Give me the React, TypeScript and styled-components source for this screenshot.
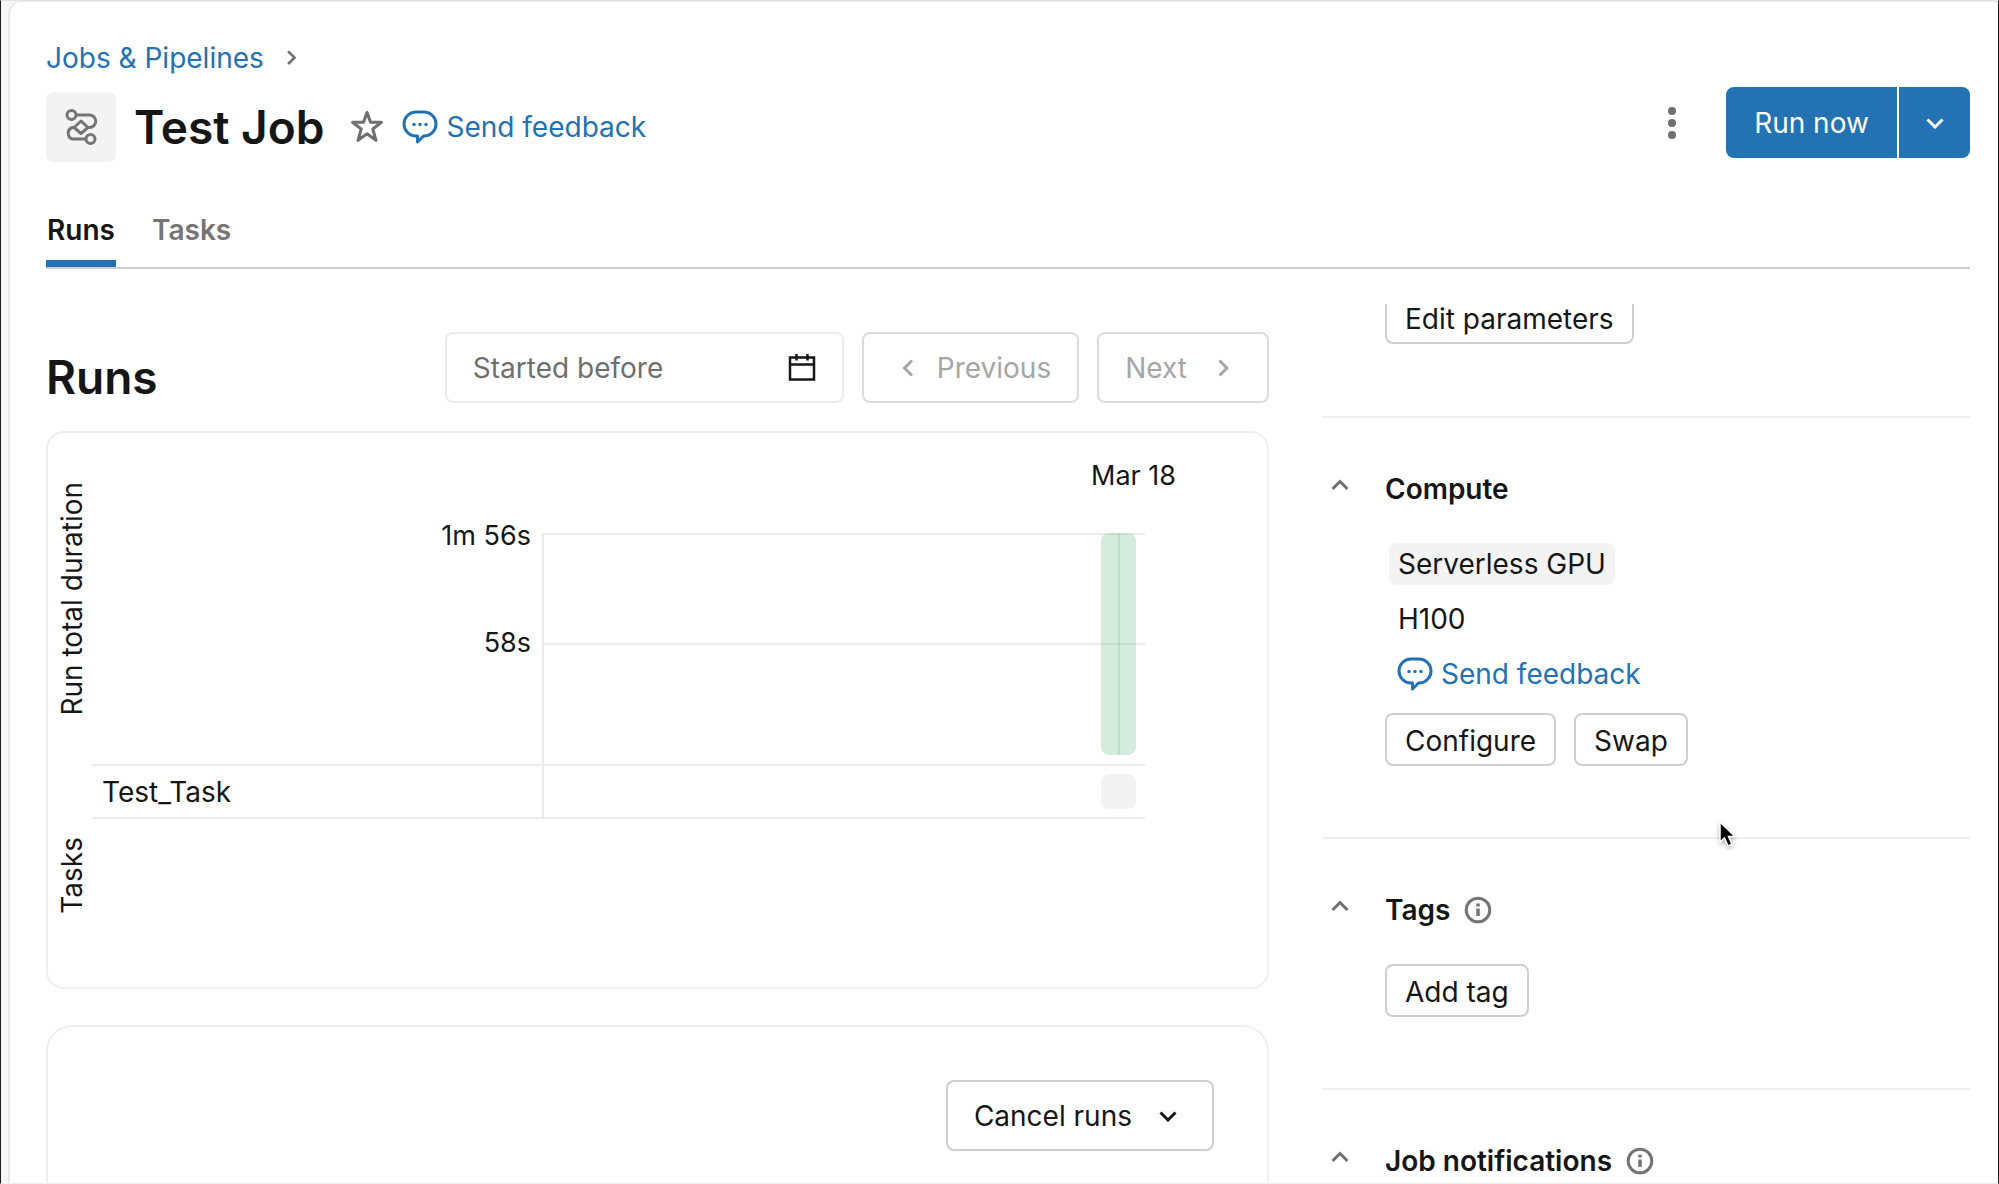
import React from "react";
import styled, { createGlobalStyle } from "styled-components";

const Global = createGlobalStyle`
  *, *::before, *::after { box-sizing: border-box; }
  body {
    margin: 0;
    overflow: hidden;
    background: #f7f7f7;
    color: #161616;
    font-family: Inter, "Liberation Sans", sans-serif;
    font-size: 28px;
    line-height: 36px;
  }
  button, input { font: inherit; color: inherit; }
  h1, h2, h3, p { margin: 0; }
  svg { display: block; flex: none; }
`;

const Frame = styled.div`
  height: 100vh;
  padding-left: 7px;
  border: 1px solid #1c1c1e;
  border-top: 1px solid #e2e2e2;
  border-bottom: 1px solid #f0f0f0;
  overflow: hidden;
`;

const Page = styled.div`
  height: 100%;
  display: flex;
  flex-direction: column;
  padding: 38px 28px 0 36px;
  background: #fff;
  border-left: 2px solid #e8e8e8;
  border-top: 1px solid #ececec;
  border-top-left-radius: 14px;
`;

const Breadcrumb = styled.nav`
  display: flex;
  align-items: center;
  gap: 22px;
  color: #6f6f6f;
`;

const Link = styled.a`
  display: inline-flex;
  align-items: center;
  gap: 8px;
  color: #2272b4;
  text-decoration: none;
`;

const TitleBar = styled.header`
  display: flex;
  align-items: flex-start;
  margin-top: 11px;
`;

const TitleGroup = styled.div`
  display: flex;
  align-items: center;
  flex: 1;
  padding-top: 5px;
`;

const JobBadge = styled.span`
  display: grid;
  place-items: center;
  width: 70px;
  height: 70px;
  margin-right: 18px;
  border-radius: 7px;
  background: #f3f3f3;
  color: #757575;
`;

const Heading = styled.h1`
  font-size: 46px;
  line-height: 56px;
  font-weight: 600;
`;

const IconButton = styled.button`
  display: grid;
  place-items: center;
  padding: 0;
  border: 0;
  background: none;
  color: #6f6f6f;
`;

const StarButton = styled(IconButton)`
  margin: 0 18px 0 26px;
`;

const Kebab = styled(IconButton)`
  width: 40px;
  height: 71px;
  margin-right: 34px;
`;

const SplitButton = styled.div`
  display: flex;
  height: 71px;
`;

const RunButton = styled.button`
  width: 171px;
  border: 0;
  border-radius: 8px 0 0 8px;
  background: #2272b4;
  color: #fff;
`;

const RunMenuButton = styled.button`
  display: grid;
  place-items: center;
  width: 71px;
  margin-left: 2px;
  padding: 0;
  border: 0;
  border-radius: 0 8px 8px 0;
  background: #2272b4;
  color: #fff;
`;

const Tabs = styled.div`
  display: flex;
  gap: 36px;
  margin-top: 50px;
  border-bottom: 2px solid #cfcfcf;
`;

const Tab = styled.button<{ $active?: boolean }>`
  min-width: 70px;
  padding: 0 0 12px;
  border: 0;
  border-bottom: 7px solid ${(p) => (p.$active ? "#2272b4" : "transparent")};
  background: none;
  font-weight: 600;
  color: ${(p) => (p.$active ? "#161616" : "#757575")};
`;

const Body = styled.div`
  display: grid;
  grid-template-columns: minmax(0, 1fr) 647px;
  gap: 54px;
  flex: 1;
  min-height: 0;
  padding-top: 35px;
`;

const Column = styled.main`
  min-height: 0;
  padding-top: 28px;
  overflow: hidden;
`;

const Toolbar = styled.div`
  display: flex;
  gap: 18px;
  height: 71px;
`;

const SectionHeading = styled.h2`
  flex: 1;
  padding-top: 17px;
  font-size: 46px;
  line-height: 56px;
  font-weight: 600;
`;

const DateField = styled.label`
  display: flex;
  align-items: center;
  width: 399px;
  padding: 0 26px;
  border: 2px solid #ebebeb;
  border-radius: 8px;
`;

const DateInput = styled.input`
  flex: 1;
  min-width: 0;
  padding: 0;
  border: 0;
  outline: 0;
  background: none;
  &::placeholder { color: #6f6f6f; opacity: 1; }
`;

const OutlineButton = styled.button<{ $size?: "small"; $gap?: number }>`
  display: flex;
  align-items: center;
  justify-content: center;
  gap: ${(p) => p.$gap ?? 18}px;
  height: ${(p) => (p.$size === "small" ? "53px" : "71px")};
  padding: ${(p) => (p.$size === "small" ? "2px 18px 0" : "0 26px")};
  border: 2px solid #cfcfcf;
  border-radius: 8px;
  background: #fff;
  line-height: 28px;
  &:disabled { color: #a6a6a6; border-color: #dcdcdc; }
`;

const ButtonIcon = styled.span`
  display: grid;
  place-items: center;
  width: 36px;
`;

const ChartCard = styled.section`
  display: grid;
  grid-template-columns: 44px 450px minmax(0, 1fr) 122px;
  grid-template-rows: 100px 231px 55px 168px;
  margin-top: 28px;
  border: 2px solid #efefef;
  border-radius: 18px;
  font-size: 27px;
  line-height: 32px;
`;

const AxisTitle = styled.span<{ $rows: string }>`
  grid-column: 1;
  grid-row: ${(p) => p.$rows};
  place-self: center end;
  padding-left: 4px;
  font-size: 28px;
  writing-mode: vertical-rl;
  rotate: 180deg;
`;

const DateTick = styled.span`
  grid-column: 3 / 5;
  grid-row: 1;
  padding: 27px 91px 0 0;
  text-align: right;
`;

const DurationTicks = styled.div`
  grid-column: 2;
  grid-row: 1 / 3;
  display: flex;
  flex-direction: column;
  gap: 75px;
  padding: 87px 11px 0 0;
  text-align: right;
`;

const Plot = styled.div`
  grid-column: 3;
  grid-row: 2;
  display: grid;
  grid-template: 110px 1fr / 1fr;
  border-left: 2px solid #ebebeb;
`;

const GridBand = styled.div<{ $row: number }>`
  grid-area: ${(p) => p.$row} / 1;
  border-top: 2px solid #ebebeb;
`;

const DurationBar = styled.div`
  grid-area: 1 / 1 / 3 / 2;
  justify-self: end;
  display: flex;
  justify-content: center;
  width: 35px;
  height: 222px;
  margin-right: 9px;
  border-radius: 8px;
  background: rgba(120, 198, 152, 0.33);
  &::after {
    content: "";
    width: 2px;
    background: rgba(130, 170, 145, 0.25);
  }
`;

const TaskRow = styled.div`
  grid-column: 2 / 4;
  grid-row: 3;
  display: grid;
  grid-template-columns: 450px minmax(0, 1fr);
  border: solid #ebebeb;
  border-width: 2px 0;
  font-size: 28px;
`;

const TaskName = styled.span`
  align-self: center;
  padding-left: 10px;
`;

const TaskCell = styled.div`
  display: flex;
  align-items: center;
  justify-content: flex-end;
  padding-right: 9px;
  border-left: 2px solid #ebebeb;
`;

const TaskStatus = styled.span`
  width: 35px;
  height: 35px;
  border-radius: 8px;
  background: #f3f3f3;
`;

const RunsCard = styled.section`
  display: flex;
  justify-content: flex-end;
  align-items: flex-start;
  height: 400px;
  margin-top: 36px;
  padding: 53px;
  border: 2px solid #efefef;
  border-radius: 26px;
`;

const Sidebar = styled.aside`
  min-height: 0;
  overflow: hidden;
`;

const Scrolled = styled.div`
  margin-top: -13px;
`;

const Section = styled.section`
  padding: 0 0 72px 62px;
  & + & {
    display: grid;
    grid-template-columns: 62px 1fr;
    padding: 53px 0 71px;
    border-top: 2px solid #efefef;
  }
`;

const SectionToggle = styled(IconButton)`
  height: 28px;
  justify-self: start;
  margin-left: 8px;
`;

const SectionTitle = styled.h3`
  display: flex;
  align-items: center;
  gap: 14px;
  font-size: 28px;
  line-height: 36px;
  font-weight: 600;
  color: #161616;
  svg { color: #757575; }
`;

const SectionBody = styled.div`
  grid-column: 2;
  padding-top: 36px;
`;

const Details = styled.div`
  display: flex;
  flex-direction: column;
  align-items: flex-start;
  padding-left: 4px;
`;

const Chip = styled.span`
  padding: 3px 9px;
  border-radius: 8px;
  background: #f3f3f3;
`;

const Detail = styled.p`
  padding: 16px 9px 19px;
`;

const DetailLink = styled(Link)`
  padding-left: 8px;
`;

const Actions = styled.div`
  display: flex;
  gap: 18px;
  &:not(:first-child) { padding-top: 21px; }
`;

const Pointer = styled.svg`
  position: fixed;
  left: 1717px;
  top: 820px;
  filter: drop-shadow(0 2px 2px rgba(0, 0, 0, 0.3));
`;

type Direction = "up" | "down" | "left" | "right";
const chevrons: Record<Direction, string> = {
  up: "M1.5 10 9 2.5 16.5 10",
  down: "M1.5 2.5 9 10 16.5 2.5",
  left: "M10 1.5 2.5 9 10 16.5",
  right: "M2.5 1.5 10 9 2.5 16.5",
};

function Chevron({ to, small }: { to: Direction; small?: boolean }) {
  const tall = to === "left" || to === "right";
  const w = tall ? 12 : 18;
  const h = tall ? 18 : 12;
  const k = small ? 0.85 : 1;
  return (
    <svg width={w * k} height={h * k} viewBox={`0 0 ${w} ${h}`} fill="none" stroke="currentColor" strokeWidth="3" aria-hidden="true">
      <path d={chevrons[to]} />
    </svg>
  );
}

function WorkflowIcon() {
  return (
    <svg width="34" height="38" viewBox="0 0 34 38" fill="none" stroke="currentColor" strokeWidth="3" aria-hidden="true">
      <circle cx="7.500" cy="7" r="4.500" />
      <circle cx="26.500" cy="31" r="4.500" />
      <path d="M12 7h13.500a6 6 0 0 1 0 12.500H24L17 13l-7 6.500 7 6L24 19.500" strokeLinejoin="round" />
      <path d="M22 31H8.500a6 6 0 0 1 0-11.500H10" />
    </svg>
  );
}

function StarIcon() {
  return (
    <svg width="34" height="34" viewBox="0 0 34 34" fill="none" stroke="currentColor" strokeWidth="3" strokeLinejoin="round" aria-hidden="true">
      <path d="M17 2.500l3.500 9.800h11l-8.700 6.700 3.200 11.300-9-6.600-9 6.600 3.200-11.300-8.700-6.700h11z" />
    </svg>
  );
}

function SpeechIcon() {
  return (
    <svg width="36" height="34" viewBox="0 0 36 34" fill="none" stroke="currentColor" strokeWidth="3" strokeLinejoin="round" aria-hidden="true">
      <path d="M14 2h8a12 12 0 0 1 0 24h-.5L15.500 32V26H14A12 12 0 0 1 14 2Z" />
      <g fill="currentColor" stroke="none">
        <circle cx="12" cy="14.500" r="1.700" />
        <circle cx="18" cy="14.500" r="1.700" />
        <circle cx="24" cy="14.500" r="1.700" />
      </g>
    </svg>
  );
}

function CalendarIcon() {
  return (
    <svg width="28" height="28" viewBox="0 0 28 28" fill="none" stroke="#161616" strokeWidth="2.500" aria-hidden="true">
      <path d="M2 3.500h24v22H2zM2 10.500h24M8.500 0v6.500M19.500 0v6.500" />
    </svg>
  );
}

function InfoIcon() {
  return (
    <svg width="28" height="28" viewBox="0 0 28 28" fill="none" stroke="currentColor" strokeWidth="3" aria-hidden="true">
      <circle cx="14" cy="14" r="11.800" />
      <path d="M14 12.500v7.500M14 7.500v3" strokeWidth="3.500" />
    </svg>
  );
}

function DotsIcon() {
  return (
    <svg width="8" height="32" viewBox="0 0 8 32" fill="currentColor" aria-hidden="true">
      <circle cx="4" cy="4" r="4" />
      <circle cx="4" cy="16" r="4" />
      <circle cx="4" cy="28" r="4" />
    </svg>
  );
}

function PanelSection({ title, info, children }: { title: string; info?: boolean; children?: React.ReactNode }) {
  return (
    <Section>
      <SectionToggle aria-label={`Collapse ${title}`}>
        <Chevron to="up" />
      </SectionToggle>
      <SectionTitle>
        {title}
        {info && <InfoIcon />}
      </SectionTitle>
      <SectionBody>{children}</SectionBody>
    </Section>
  );
}

export default function App() {
  return (
    <>
      <Global />
      <Frame>
        <Page>
          <Breadcrumb>
            <Link href="#jobs">Jobs &amp; Pipelines</Link>
            <Chevron to="right" small />
          </Breadcrumb>
          <TitleBar>
            <TitleGroup>
              <JobBadge>
                <WorkflowIcon />
              </JobBadge>
              <Heading>Test Job</Heading>
              <StarButton aria-label="Add to favorites">
                <StarIcon />
              </StarButton>
              <Link href="#feedback">
                <SpeechIcon />
                Send feedback
              </Link>
            </TitleGroup>
            <Kebab aria-label="More actions">
              <DotsIcon />
            </Kebab>
            <SplitButton>
              <RunButton>Run now</RunButton>
              <RunMenuButton aria-label="More run options">
                <Chevron to="down" />
              </RunMenuButton>
            </SplitButton>
          </TitleBar>
          <Tabs role="tablist">
            <Tab role="tab" aria-selected="true" $active>
              Runs
            </Tab>
            <Tab role="tab" aria-selected="false">
              Tasks
            </Tab>
          </Tabs>
          <Body>
            <Column>
              <Toolbar>
                <SectionHeading>Runs</SectionHeading>
                <DateField>
                  <DateInput aria-label="Started before" placeholder="Started before" />
                  <CalendarIcon />
                </DateField>
                <OutlineButton disabled $gap={11}>
                  <ButtonIcon>
                    <Chevron to="left" />
                  </ButtonIcon>
                  Previous
                </OutlineButton>
                <OutlineButton disabled>
                  Next
                  <ButtonIcon>
                    <Chevron to="right" />
                  </ButtonIcon>
                </OutlineButton>
              </Toolbar>
              <ChartCard>
                <AxisTitle $rows="1 / 3">Run total duration</AxisTitle>
                <AxisTitle $rows="3 / 5">Tasks</AxisTitle>
                <DateTick>Mar 18</DateTick>
                <DurationTicks>
                  <span>1m 56s</span>
                  <span>58s</span>
                </DurationTicks>
                <Plot>
                  <GridBand $row={1} />
                  <GridBand $row={2} />
                  <DurationBar />
                </Plot>
                <TaskRow>
                  <TaskName>Test_Task</TaskName>
                  <TaskCell>
                    <TaskStatus />
                  </TaskCell>
                </TaskRow>
              </ChartCard>
              <RunsCard>
                <OutlineButton>
                  Cancel runs
                  <ButtonIcon>
                    <Chevron to="down" />
                  </ButtonIcon>
                </OutlineButton>
              </RunsCard>
            </Column>
            <Sidebar>
              <Scrolled>
                <Section>
                  <OutlineButton $size="small">Edit parameters</OutlineButton>
                </Section>
                <PanelSection title="Compute">
                  <Details>
                    <Chip>Serverless GPU</Chip>
                    <Detail>H100</Detail>
                    <DetailLink href="#gpu-feedback">
                      <SpeechIcon />
                      Send feedback
                    </DetailLink>
                  </Details>
                  <Actions>
                    <OutlineButton $size="small">Configure</OutlineButton>
                    <OutlineButton $size="small">Swap</OutlineButton>
                  </Actions>
                </PanelSection>
                <PanelSection title="Tags" info>
                  <Actions>
                    <OutlineButton $size="small">Add tag</OutlineButton>
                  </Actions>
                </PanelSection>
                <PanelSection title="Job notifications" info />
              </Scrolled>
            </Sidebar>
          </Body>
        </Page>
      </Frame>
      <Pointer width="20" height="28" viewBox="0 0 20 28" aria-hidden="true">
        <path d="M3 2v20l4.500-4 3.500 8 4-1.800-3.500-7.700H18Z" fill="#000" stroke="#fff" strokeWidth="1.500" />
      </Pointer>
    </>
  );
}
